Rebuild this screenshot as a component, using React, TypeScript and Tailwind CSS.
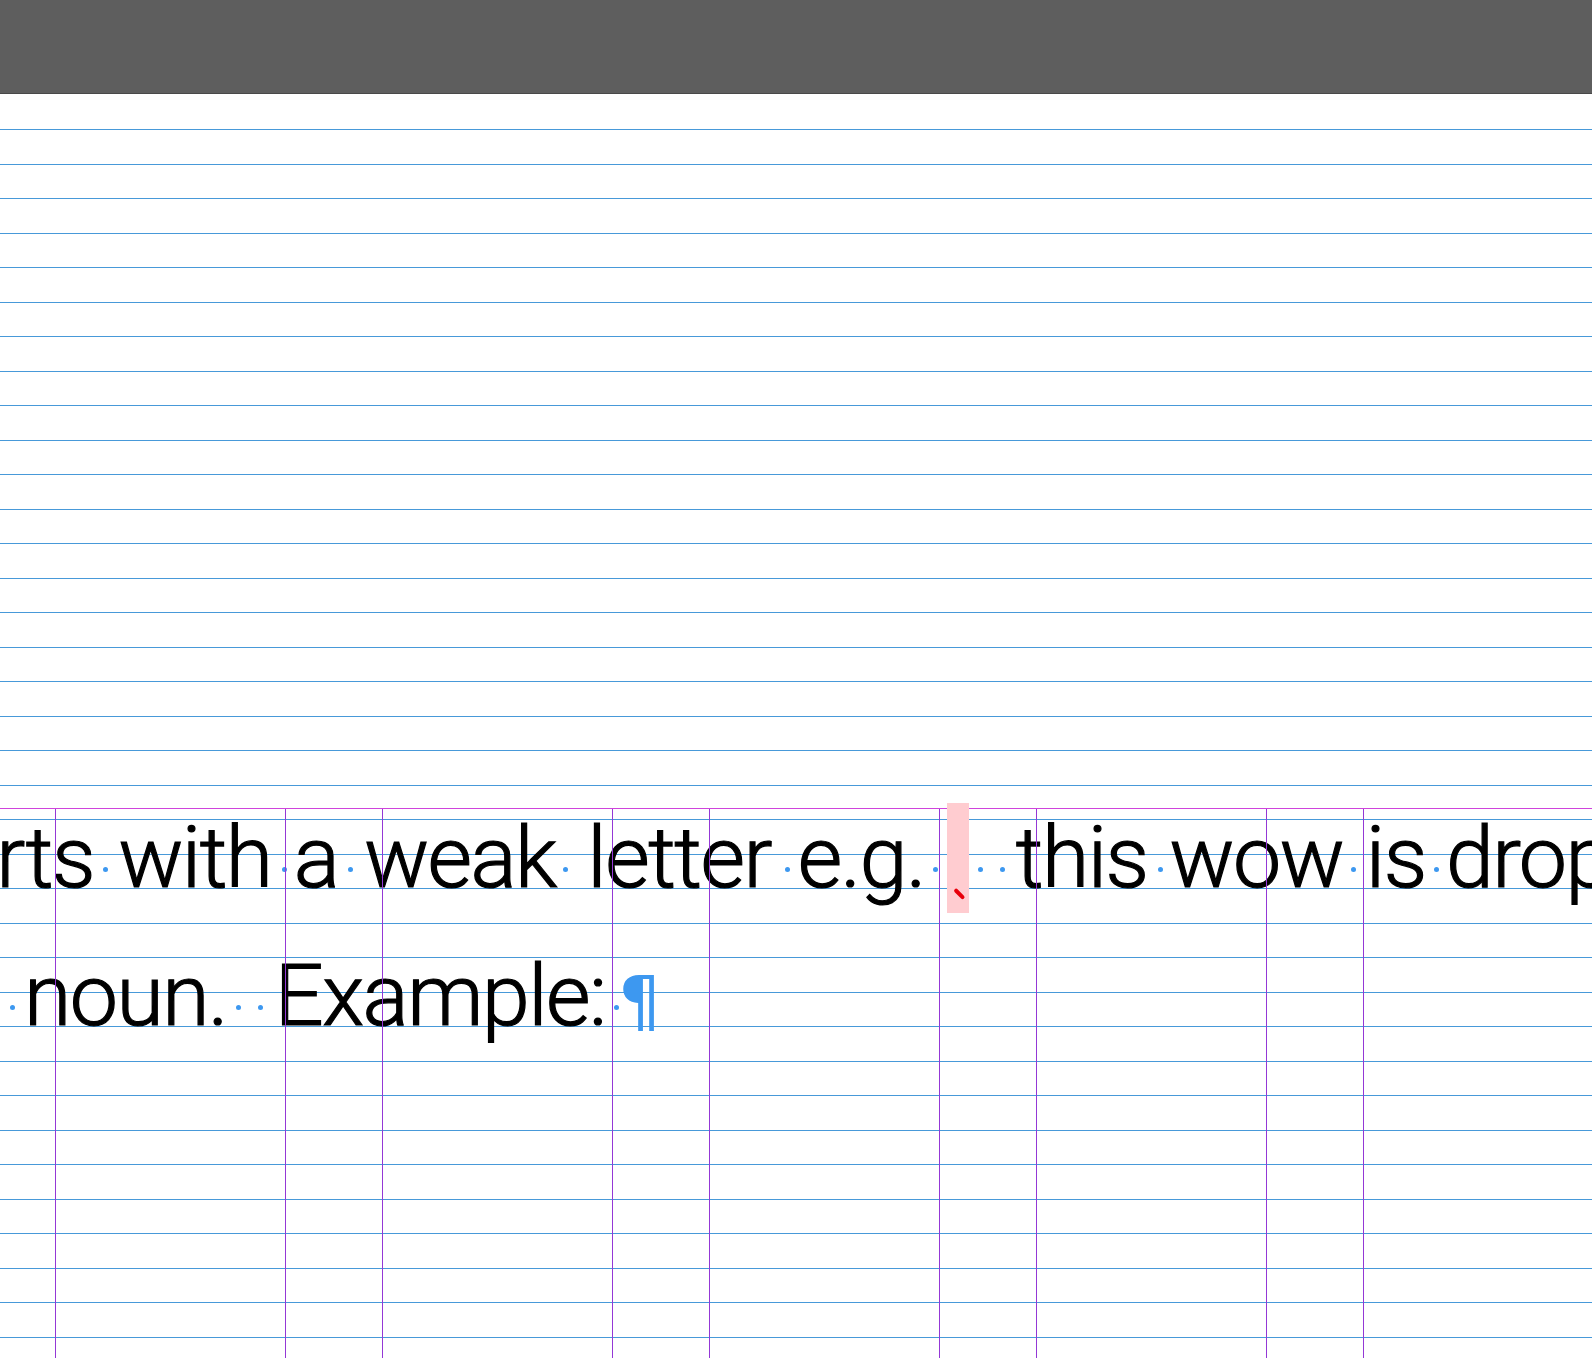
import React from 'react';

// grid lines of the layout view: baseline grid every 34.514px, first at y=129.3
const GRID_LINES = Array.from({ length: 36 }, (_, i) => i);

// column guides: alternating column / gutter widths, starting at the left margin
const COLUMNS = [
  'w-[230px]',
  'w-[97px]',
  'w-[230px]',
  'w-[97px]',
  'w-[230px]',
  'w-[97px]',
  'w-[230px]',
  'w-[97px]',
  'w-[230px]',
];

const Dot = () => <span className="block size-[5px] shrink-0 rounded-full bg-[#3d98f0]" />;

// a space marker cell: fixed width, dot placed at a given left padding
const Space = ({ className, double }: { className: string; double?: boolean }) => (
  <div className={`flex shrink-0 items-start justify-start gap-[17px] pt-[78px] ${className}`}>
    <Dot />
    {double && <Dot />}
  </div>
);

// a word cell: ink is centred over the measured span
const Word = ({ className, children, align = 'justify-center' }: { className: string; children: React.ReactNode; align?: string }) => (
  <div className={`flex shrink-0 ${align} ${className}`}>
    <span className="whitespace-nowrap">{children}</span>
  </div>
);

const App = () => {
  return (
    <div className="h-[1358px] w-[1592px] overflow-hidden bg-white font-['Roboto',sans-serif] text-black">
      <header className="h-[94px] border-b border-[#484848] bg-[#5e5e5e]" />

      <div className="relative h-[1264px] overflow-hidden">
        {/* baseline grid */}
        <div className="pointer-events-none absolute inset-0 flex flex-col pt-[35.3px]">
          {GRID_LINES.map((i) => (
            <div key={i} className="h-[34.514px] shrink-0 border-t border-[#4799d9]" />
          ))}
        </div>

        {/* text frame */}
        <div className="relative pt-[695.4px] text-[86px] leading-[138px] font-light tracking-[-1.5px] [-webkit-text-stroke:1.2px_black]">
          <div className="flex h-[138px]">
            <Word className="w-[94px]" align="justify-end">starts</Word>
            <Space className="w-[26.7px] pl-[8.5px]" />
            <Word className="w-[148.6px]">with</Word>
            <Space className="w-[30px] pl-[12.5px]" />
            <Word className="w-[33.7px]">a</Word>
            <Space className="w-[35.3px] pl-[15.2px]" />
            <Word className="w-[183.4px]">weak</Word>
            <Space className="w-[30px] pl-[11.8px]" />
            <Word className="w-[195px]">letter</Word>
            <Space className="w-[26px] pl-[8.5px]" />
            <Word className="w-[117.3px]">e.g.</Word>
            <Space className="w-[27px] pl-[13.2px]" />
            <div className="relative z-20 w-[22.3px] shrink-0">
              <div className="mt-[13.9px] h-[109.4px] bg-[#ffccd0] pt-[89px] pl-[6px]">
                <div className="h-[3.5px] w-[13px] rotate-45 rounded-full bg-[#e8000b]" />
              </div>
            </div>
            <Space className="w-[47.4px] pl-[9.2px]" double />
            <Word className="w-[130px]">this</Word>
            <Space className="w-[26px] pl-[11.8px]" />
            <Word className="w-[167.3px]">wow</Word>
            <Space className="w-[30px] pl-[10.8px]" />
            <Word className="w-[51.7px]">is</Word>
            <Space className="w-[24.3px] pl-[12.5px]" />
            <Word className="w-[300px]" align="justify-start">dropped</Word>
          </div>

          <div className="flex h-[138px]">
            <Space className="w-[28.3px] pl-[9.8px]" />
            <Word className="w-[194.4px]">noun.</Word>
            <Space className="w-[56.6px] pl-[13.8px]" double />
            <Word className="w-[321.7px]">Example:</Word>
            <Space className="w-[17px] pl-[13.5px]" />
            <div className="flex w-[60px] shrink-0 justify-start pt-[5px] font-['DejaVu_Sans',sans-serif] text-[68px] font-normal tracking-normal text-[#3d98f0] [-webkit-text-stroke:0px]">
              <span>¶</span>
            </div>
          </div>
        </div>

        {/* margin and column guides */}
        <div className="pointer-events-none absolute inset-x-0 top-[714.3px] bottom-0 z-10 flex flex-col">
          <div className="h-px shrink-0 bg-[#cf43dc]" />
          <div className="flex flex-1 pl-[55px]">
            {COLUMNS.map((w, i) => (
              <div key={i} className={`h-full shrink-0 border-l border-[#9438d6] ${w}`} />
            ))}
          </div>
        </div>
      </div>
    </div>
  );
};

export default App;
